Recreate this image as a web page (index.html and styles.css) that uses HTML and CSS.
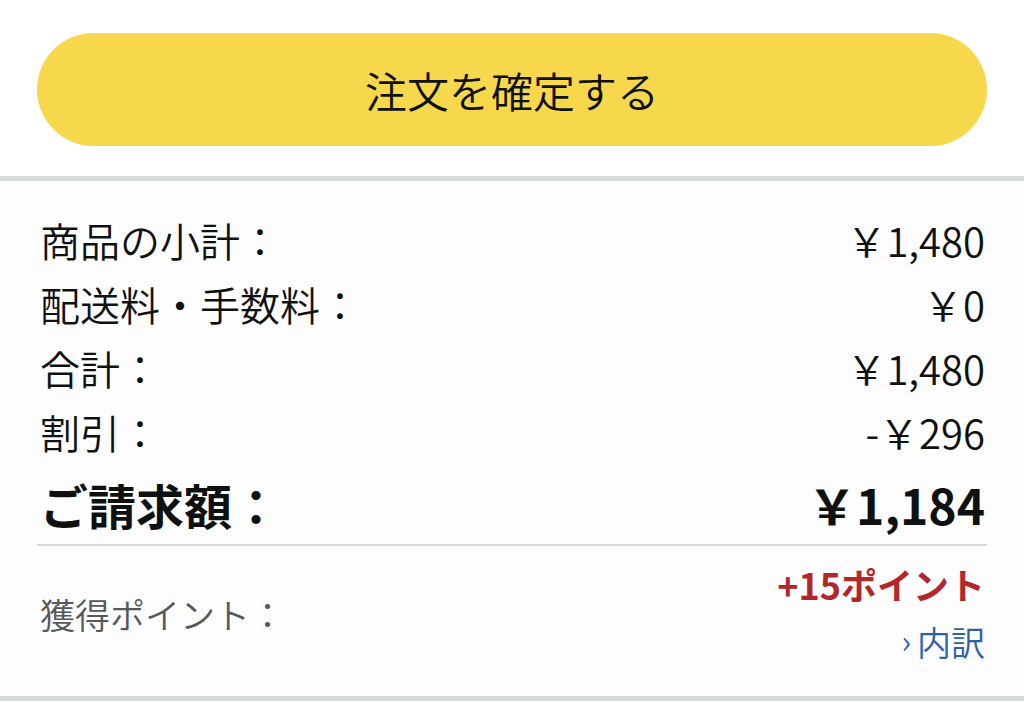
FILE: index.html
```html
<!DOCTYPE html>
<html lang="ja">
<head>
<meta charset="utf-8">
<title>注文を確定する</title>
<link rel="stylesheet" href="styles.css">
</head>
<body>
  <div class="top">
    <button class="place-order">注文を確定する</button>
  </div>
  <div class="summary">
    <div class="row"><span>商品の小計：</span><span>￥1,480</span></div>
    <div class="row"><span>配送料・手数料：</span><span>￥0</span></div>
    <div class="row"><span>合計：</span><span>￥1,480</span></div>
    <div class="row"><span>割引：</span><span>-￥296</span></div>
    <div class="row total"><span>ご請求額：</span><span>￥1,184</span></div>
    <div class="points">
      <span class="points-label">獲得ポイント：</span>
      <div class="points-right">
        <span class="points-value">+15ポイント</span>
        <a class="breakdown" href="#"><span class="chev">›</span>内訳</a>
      </div>
    </div>
  </div>
</body>
</html>
```
FILE: styles.css
```css
html, body {
  margin: 0;
  padding: 0;
  background: #fdfdfd;
  font-family: "Noto Sans CJK JP", "Noto Sans", sans-serif;
  font-weight: 350;
  color: #0f1111;
}
.top {
  background: #ffffff;
  padding: 33px 37px 30px;
  border-bottom: 5px solid #d5dbdb;
}
.place-order {
  display: block;
  width: 100%;
  height: 113px;
  border: none;
  border-radius: 57px;
  background: #f7d84c;
  color: #0f1111;
  font-family: inherit;
  font-weight: 350;
  font-size: 42px;
  padding: 0;
  line-height: 1;
}
.summary {
  padding: 27px 37px 0;
  border-bottom: 5px solid #d5dbdb;
}
.row {
  display: flex;
  justify-content: space-between;
  align-items: center;
  height: 64px;
  font-size: 40px;
  line-height: 64px;
  padding: 0 2px 0 3px;
}
.row.total {
  height: 80px;
  line-height: 80px;
  font-size: 48px;
  font-weight: 700;
  border-bottom: 2px solid #d5d9d9;
}
.points {
  display: flex;
  justify-content: space-between;
  align-items: center;
  padding: 9px 2px 25px 3px;
}
.points-label {
  font-size: 35px;
  color: #565959;
}
.points-right {
  display: flex;
  flex-direction: column;
  align-items: flex-end;
}
.points-value {
  font-size: 36px;
  font-weight: 700;
  color: #b3262a;
  line-height: 58px;
}
.breakdown {
  font-size: 34px;
  color: #2a62a8;
  text-decoration: none;
  line-height: 58px;
}
.chev {
  font-size: 32px;
  margin-right: 6px;
  position: relative;
  top: -3px;
}
```
